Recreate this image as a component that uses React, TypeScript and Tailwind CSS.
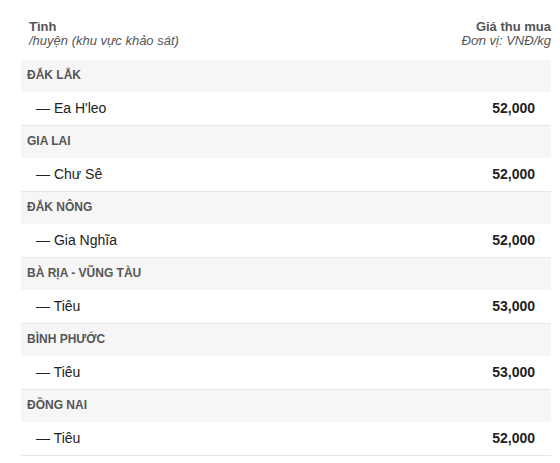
const GROUPS = [
  { province: "ĐẮK LẮK", district: "Ea H'leo", price: "52,000" },
  { province: "GIA LAI", district: "Chư Sê", price: "52,000" },
  { province: "ĐẮK NÔNG", district: "Gia Nghĩa", price: "52,000" },
  { province: "BÀ RỊA - VŨNG TÀU", district: "Tiêu", price: "53,000" },
  { province: "BÌNH PHƯỚC", district: "Tiêu", price: "53,000" },
  { province: "ĐỒNG NAI", district: "Tiêu", price: "52,000" },
];

export default function App() {
  return (
    <div className="min-h-[463px] bg-white font-['Liberation_Sans',Arial,sans-serif]">
      <div className="ml-[21px] w-[530px]">
        <div className="flex justify-between pt-[20px] pb-[12px] text-[13px] leading-[14px] text-[#555]">
          <div className="pl-[8px]">
            <div className="font-bold">Tình</div>
            <div className="italic">/huyện (khu vực khảo sát)</div>
          </div>
          <div className="text-right">
            <div className="font-bold">Giá thu mua</div>
            <div className="italic">Đơn vị: VNĐ/kg</div>
          </div>
        </div>

        {GROUPS.map((g) => (
          <div key={g.province}>
            <div className="flex h-[32px] items-center bg-[#f6f6f6] pb-[2px] pl-[6px] text-[12px] font-bold text-[#555]">
              {g.province}
            </div>
            <div className="flex h-[34px] items-center justify-between border-b border-[#e6e6e6] pr-[16px] pl-[15px] text-[14px] text-[#222]">
              <span>— {g.district}</span>
              <span className="font-bold">{g.price}</span>
            </div>
          </div>
        ))}
      </div>
    </div>
  );
}
